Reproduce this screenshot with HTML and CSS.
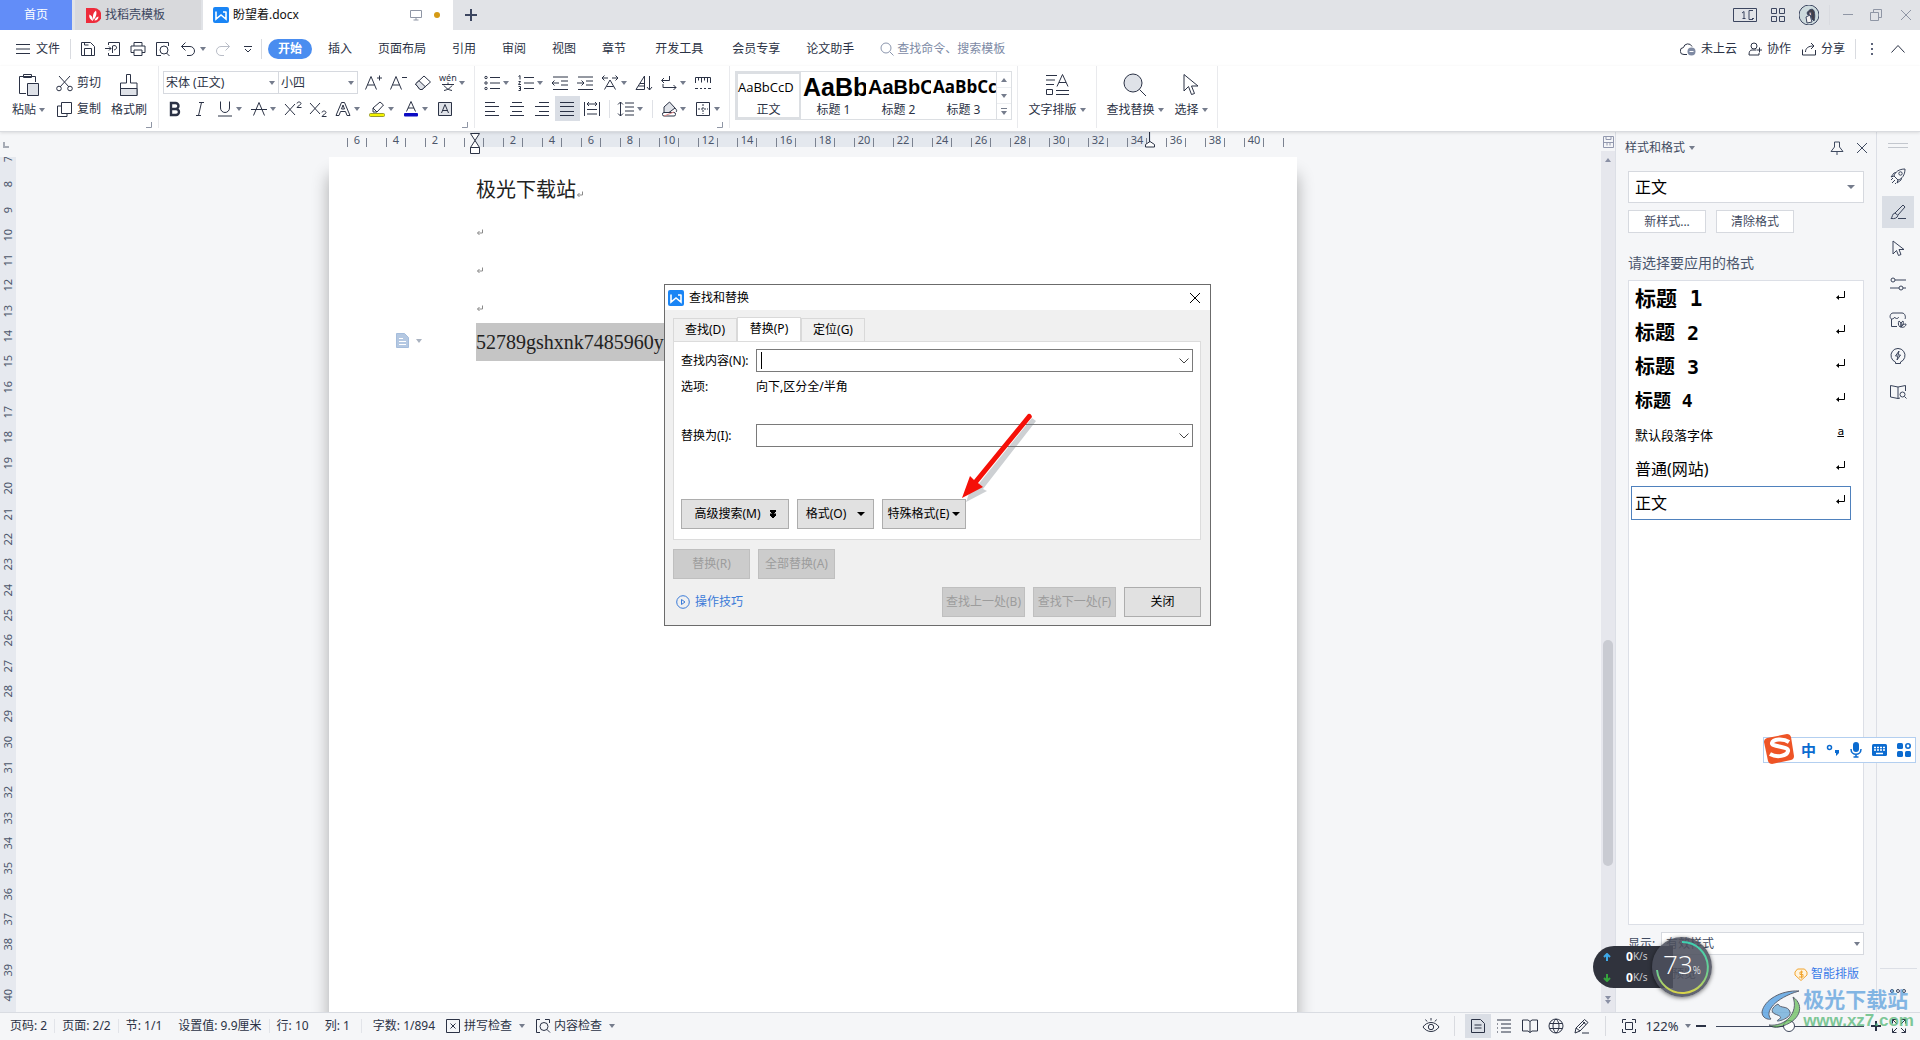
FILE: index.html
```html
<!DOCTYPE html>
<html lang="zh-CN">
<head>
<meta charset="utf-8">
<title>盼望着.docx</title>
<link rel="stylesheet" href="styles.css">
</head>
<body>
<svg class="defs" aria-hidden="true">
  <symbol id="caret" viewBox="0 0 6 6"><path d="M0 1h6L3 5z" fill="currentColor" stroke="none"/></symbol>
  <symbol id="corner" viewBox="0 0 6 6"><path d="M5.500 0v5.500H0"/></symbol>
  <symbol id="wlogo" viewBox="0 0 16 16"><rect width="16" height="16" rx="2" fill="#1a85f5" stroke="none"/><path d="M3 4.500v7.500l5-4 5 4V4.500M10 5h3" fill="none" stroke="#fff" stroke-width="1.600"/></symbol>
  <symbol id="close" viewBox="0 0 12 12"><path d="M1 1l10 10M11 1L1 11"/></symbol>
  <symbol id="pmark" viewBox="0 0 8 8"><path d="M6.500 1.500v3.500H1.500M3.500 3L1.500 5l2 2"/></symbol>
  <symbol id="enter" viewBox="0 0 12 10"><path d="M9.500 0v6.500H2"/><path d="M4 4v5L1 6.500z" fill="currentColor" stroke="none"/></symbol>
  <symbol id="pen" viewBox="0 0 18 18"><path d="M2 16l1-5L11.500 2.500l3.500 3L7 14zM3 11l4 3M9.500 4.500l3.500 3M9 16h7M6 11l6-6"/></symbol>
</svg>

<header class="titlebar">
  <button class="tab tab-home">首页</button>
  <button class="tab tab-docer"><svg width="15" height="15" viewBox="0 0 15 15"><path d="M0 0h8a7.500 7.500 0 010 15H0z" fill="#ee2b3b" stroke="none"/><path d="M7 13C3 11 3 8 3.500 6.500 5.500 7.500 7 9 7 13zM7.500 12C6 7 8 4 10 2.500c1 3 .5 6-2.500 9.500zM8.500 12.500c.5-2 2-3.500 4-4 0 2-1 4-4 4z" fill="#fff" stroke="none"/></svg>找稻壳模板</button>
  <div class="tab tab-doc"><svg width="16" height="16"><use href="#wlogo"/></svg><span class="doc-name">盼望着.docx</span><svg class="soft" width="12" height="12" viewBox="0 0 12 12"><path d="M.5 1.500h11v7H.5zM6 8.500v2.500M3.500 11h5"/></svg><i class="unsaved"></i></div>
  <button class="new-tab" aria-label="新建"><svg width="12" height="12" viewBox="0 0 12 12"><path d="M6 0v12M0 6h12" stroke-width="2"/></svg></button>
  <div class="window-tools">
    <svg width="24" height="14" viewBox="0 0 24 14"><path d="M.5.500h23v13H.5zM20 2.500h-4v9h4M9 5l2-1.500v7M9.500 10.500h3M19 10.500h2"/></svg>
    <svg width="14" height="14" viewBox="0 0 14 14"><path d="M.5.500h5v5h-5zM8.500.500h5v5h-5zM.5 8.500h5v5h-5zM8.500 8.500h5v5h-5z"/></svg>
    <svg width="20" height="20" viewBox="0 0 20 20" stroke="none"><circle cx="10" cy="10" r="10" fill="#cddadd"/><path d="M8 8c2-4 6-5 7-2s1 7 0 10l-2-2-1-5-3 1z" fill="#433f47"/><path d="M10 7l2 0 1 4-3-1z" fill="#e5c2b8"/><path d="M7 12l4-2 2 7-5 1z" fill="#f3f1f0"/></svg>
    <i class="vline"></i>
    <svg class="soft" width="12" height="12" viewBox="0 0 12 12"><path d="M1 5.500h10"/></svg>
    <svg class="soft" width="12" height="12" viewBox="0 0 12 12"><path d="M3.500 3.500v-3h8v8h-3M.5 3.500h8v8h-8z"/></svg>
    <svg class="soft last" width="12" height="12"><use href="#close"/></svg>
  </div>
</header>

<div class="menubar">
  <button class="file"><svg width="14" height="12" viewBox="0 0 14 12"><path d="M0 1.500h14M0 6h14M0 10.500h14"/></svg>文件</button>
  <i class="vline"></i>
  <div class="quick">
    <button aria-label="保存"><svg width="16" height="16" viewBox="0 0 16 16"><path d="M1.500 1.500h9l4 4v9h-13zM4.500 14V7.500h7V14M4.500 1.500V4h4"/></svg></button>
    <button aria-label="输出为PDF"><svg width="16" height="16" viewBox="0 0 16 16"><path d="M3.500 4V1.500h11v13h-11V12M0 7.500h6M4 5.500l2 2-2 2M7.500 12V5c4-2 6 3 1.500 4"/></svg></button>
    <button aria-label="打印"><svg width="16" height="16" viewBox="0 0 16 16"><path d="M4 5V1.500h8V5M4 11.500H1V5h14v6.500h-3M4 9h8v5.500H4z"/></svg></button>
    <button aria-label="打印预览"><svg width="16" height="16" viewBox="0 0 16 16"><path d="M6 14.500H1.500v-13h12V5M11.500 12l3 3"/><circle cx="9" cy="9" r="4"/></svg></button>
    <button class="undo" aria-label="撤销"><svg width="16" height="16" viewBox="0 0 16 16"><path d="M5.500 1.500l-4 4 4 4M1.500 5.500H10a4.500 4.500 0 010 9H7"/></svg><svg class="grey" width="6" height="6"><use href="#caret"/></svg></button>
    <button class="faded" aria-label="恢复"><svg width="16" height="16" viewBox="0 0 16 16"><path d="M10.500 1.500l4 4-4 4M14.500 5.500H6a4.500 4.500 0 000 9h3"/></svg></button>
    <button class="extra" aria-label="更多"><svg width="10" height="10" viewBox="0 0 10 10"><path d="M1 2.500h8M2 5l3 3 3-3"/></svg></button>
  </div>
  <i class="vline"></i>
  <nav class="tabs">
    <a href="#" class="current">开始</a><a href="#">插入</a><a href="#">页面布局</a><a href="#">引用</a><a href="#">审阅</a><a href="#">视图</a><a href="#">章节</a><a href="#" class="wide">开发工具</a><a href="#" class="wide">会员专享</a><a href="#">论文助手</a>
  </nav>
  <label class="search"><svg width="14" height="14" viewBox="0 0 14 14"><circle cx="6" cy="6" r="5"/><path d="M10 10l3.500 3.500"/></svg><input type="text" placeholder="查找命令、搜索模板"></label>
  <div class="share">
    <button><svg width="16" height="14" viewBox="0 0 16 14"><path d="M7 12.500H4a3.500 3.500 0 01-.5-7 4.500 4.500 0 018.500-1"/><circle cx="11.500" cy="9.500" r="4" fill="#7f8aa3" stroke="none"/><path d="M9.500 9.500h4" stroke="#fff"/></svg>未上云</button>
    <button><svg width="14" height="14" viewBox="0 0 14 14"><circle cx="6" cy="4" r="3"/><path d="M8.500 8H4c-2 0-3 1.500-3 5h10v-2M9 8h5M11.500 5.500v5"/></svg>协作</button>
    <button><svg width="14" height="14" viewBox="0 0 14 14"><path d="M.5 7.500v5.500h13V8M3.500 10c0-4 3-6 8-6M9 1l3 3-3 3"/></svg>分享</button>
    <i class="vline"></i>
    <svg width="4" height="14" viewBox="0 0 4 14"><path d="M1 1h2v2H1zM1 6h2v2H1zM1 11h2v2H1z" fill="#5c647a" stroke="none"/></svg>
    <svg width="14" height="8" viewBox="0 0 14 8"><path d="M.5 7.500l6.500-7 6.500 7"/></svg>
  </div>
</div>

<section class="ribbon">
  <div class="group clipboard">
    <button class="big"><svg width="22" height="24" viewBox="0 0 22 24"><path d="M8 20.500H1.500v-17h16V9M5.500 1.500h8v3h-8z"/><path d="M9.500 10.500h11v12h-11z" fill="#dfe2e8"/></svg><span>粘贴<svg class="grey" width="6" height="6"><use href="#caret"/></svg></span></button>
    <div class="pair">
      <button><svg width="17" height="17" viewBox="0 0 17 17"><path d="M3 1l10 11M14 1L4 12"/><circle cx="3" cy="13.500" r="2.300"/><circle cx="14" cy="13.500" r="2.300"/></svg>剪切</button>
      <button><svg width="17" height="17" viewBox="0 0 17 17"><path d="M5.500 1.500h10v11h-10zM5.500 5H1.500v10.500H11v-3"/></svg>复制</button>
    </div>
    <button class="big"><svg width="20" height="24" viewBox="0 0 20 24"><path d="M7.500 10V1.500h4V10H18v12.500H1.500V10z"/><path d="M1.500 15.500H18v7H1.500z" fill="#dfe2e8"/></svg><span>格式刷</span></button>
    <svg class="corner" width="6" height="6"><use href="#corner"/></svg>
  </div>
  <div class="group font">
    <div class="row">
      <span class="pick face"><select aria-label="字体"><option>宋体 (正文)</option></select><svg width="6" height="6"><use href="#caret"/></svg></span><span class="pick size"><select aria-label="字号"><option>小四</option></select><svg width="6" height="6"><use href="#caret"/></svg></span>
      <button aria-label="增大字号"><svg width="18" height="18" viewBox="0 0 18 18"><path d="M1.500 15.500L7 2.500l5.500 13M3.500 11h7M13 4h5M15.500 1.500v5"/></svg></button>
      <button aria-label="减小字号"><svg width="18" height="18" viewBox="0 0 18 18"><path d="M1.500 15.500L7 2.500l5.500 13M3.500 11h7M13 3.500h5"/></svg></button>
      <button aria-label="清除格式"><svg width="18" height="18" viewBox="0 0 18 18"><path d="M1.500 10L10 2l6.500 6L8 15.500H6z"/><path d="M1.500 10L5 6.700l6.300 6L8 15.500H6z" fill="#dfe2e8"/></svg></button>
      <button class="split" aria-label="拼音指南"><svg class="pinyin" width="18" height="18" viewBox="0 0 18 18"><text x="0" y="7">wén</text><path d="M3 10.500h12M9 8.500v2M5 11.500c2 3 5 4.500 8 5M13 11.500c-2 3-5 4.500-8 5"/></svg><svg class="grey" width="6" height="6"><use href="#caret"/></svg></button>
    </div>
    <div class="row">
      <button aria-label="加粗"><svg width="18" height="18" viewBox="0 0 18 18"><path d="M5 3h4.500a3 3 0 010 6H5zM5 9h5a3 3 0 010 6H5z" stroke-width="2.400"/></svg></button>
      <button aria-label="倾斜"><svg width="18" height="18" viewBox="0 0 18 18"><path d="M8 2.500h5M5 15.500h5M10.500 2.500l-3 13"/></svg></button>
      <button class="split" aria-label="下划线"><svg width="18" height="18" viewBox="0 0 18 18"><path d="M4.500 1.500V8a4.500 4.500 0 009 0V1.500M2 16h14"/></svg><svg class="grey" width="6" height="6"><use href="#caret"/></svg></button>
      <button class="split" aria-label="删除线"><svg width="18" height="18" viewBox="0 0 18 18"><path d="M3.500 15.500L9 2.500l5.500 13M1 9.500h16"/></svg><svg class="grey" width="6" height="6"><use href="#caret"/></svg></button>
      <button aria-label="上标"><svg width="18" height="18" viewBox="0 0 18 18"><path d="M1 4l10 11M11 4L1 15M13 3.500c0-2 4-2 4 0 0 1.500-3 2-4 4h4.500"/></svg></button>
      <button aria-label="下标"><svg width="18" height="18" viewBox="0 0 18 18"><path d="M1 3l10 11M11 3L1 14M13 12.500c0-2 4-2 4 0 0 1.500-3 2-4 4h4.500"/></svg></button>
      <button class="split" aria-label="文字效果"><svg width="18" height="18" viewBox="0 0 18 18"><path d="M2 15.500L7.500 2.500h3l5.500 13h-3l-1.500-4h-5l-1.500 4zM7.500 9h3L9 5z"/></svg><svg class="grey" width="6" height="6"><use href="#caret"/></svg></button>
      <button class="split" aria-label="突出显示"><svg width="18" height="18" viewBox="0 0 18 18"><path d="M5 11V8l7-6 3.500 3L9 12H5zM5 8l4 4"/><rect x="1.500" y="13.500" width="15" height="3" rx="1" fill="#f5f500" stroke="#9a9a30"/></svg><svg class="grey" width="6" height="6"><use href="#caret"/></svg></button>
      <button class="split" aria-label="字体颜色"><svg width="18" height="18" viewBox="0 0 18 18"><path d="M4.500 11.500L9 1.500l4.500 10M6 8h6"/><rect x="2" y="13" width="14" height="3.500" rx="1" fill="#0b0bc4" stroke="none"/></svg><svg class="grey" width="6" height="6"><use href="#caret"/></svg></button>
      <button aria-label="字符底纹"><svg width="18" height="18" viewBox="0 0 18 18"><path d="M2.500 2.500h13v13h-13z" fill="#dfe2e8"/><path d="M5.500 13L9 4.500l3.500 8.500M6.500 10.500h5"/></svg></button>
    </div>
    <svg class="corner" width="6" height="6"><use href="#corner"/></svg>
  </div>
  <div class="group para">
    <div class="row">
      <button class="split" aria-label="项目符号"><svg width="18" height="18" viewBox="0 0 18 18"><path d="M7 3.500h10M7 9h10M7 14.500h10"/><circle cx="3" cy="3.500" r="1.200"/><circle cx="3" cy="9" r="1.200"/><circle cx="3" cy="14.500" r="1.200"/></svg><svg class="grey" width="6" height="6"><use href="#caret"/></svg></button>
      <button class="split" aria-label="编号"><svg width="18" height="18" viewBox="0 0 18 18"><path d="M7 3.500h10M7 9h10M7 14.500h10M1.500 2.500L3 1.500v4M1.500 7.500h2l-2 3h2.500M1.500 12.500h2v4h-2M2 14.500h1.500"/></svg><svg class="grey" width="6" height="6"><use href="#caret"/></svg></button>
      <button aria-label="减少缩进"><svg width="18" height="18" viewBox="0 0 18 18"><path d="M2 3h15M10 7h7M10 11h7M2 15.500h15M1 9h7M3.500 6.500L1 9l2.500 2.500"/></svg></button>
      <button aria-label="增加缩进"><svg width="18" height="18" viewBox="0 0 18 18"><path d="M2 3h15M10 7h7M10 11h7M2 15.500h15M1 9h7M5.500 6.500L8 9l-2.500 2.500"/></svg></button>
      <button class="split" aria-label="中文版式"><svg width="18" height="18" viewBox="0 0 18 18"><path d="M3.500 15.500L9 6l5.500 9.500M5.500 12.500h7M1 4h6M3.500 1.500L1 4l2.500 2.500M11 4h6M14.500 1.500L17 4l-2.500 2.500"/></svg><svg class="grey" width="6" height="6"><use href="#caret"/></svg></button>
      <button aria-label="排序"><svg width="18" height="18" viewBox="0 0 18 18"><path d="M1 15.500L9.500 2v13.500zM5 9.500h4.500M3.500 12h6M14.500 2v14M12 13l2.500 3 2.500-3"/></svg></button>
      <button class="split" aria-label="换行符"><svg width="18" height="18" viewBox="0 0 18 18"><path d="M9.500 2v4.500H2M4 4L1.500 6.500 4 9M3 10v3.500h13M13.500 11l2.500 2.500-2.500 2.500"/></svg><svg class="grey" width="6" height="6"><use href="#caret"/></svg></button>
      <button aria-label="制表位"><svg width="18" height="18" viewBox="0 0 18 18"><path d="M1.500 9V3.500h15V9M4.500 3.500v3M7.500 3.500v5M10.500 3.500v3M13.500 3.500v5M1 14.500h3M6 14.500h2M10 14.500h2M14 14.500h3"/></svg></button>
    </div>
    <div class="row">
      <button aria-label="左对齐"><svg width="18" height="18" viewBox="0 0 18 18"><path d="M2 2.500h10M2 6.500h14M2 11.500h10M2 15.500h14"/></svg></button>
      <button aria-label="居中"><svg width="18" height="18" viewBox="0 0 18 18"><path d="M4 2.500h10M2 6.500h14M4 11.500h10M2 15.500h14"/></svg></button>
      <button aria-label="右对齐"><svg width="18" height="18" viewBox="0 0 18 18"><path d="M6 2.500h10M2 6.500h14M6 11.500h10M2 15.500h14"/></svg></button>
      <button class="on" aria-label="两端对齐"><svg width="18" height="18" viewBox="0 0 18 18"><path d="M2 2.500h14M2 6.500h14M2 11.500h14M2 15.500h14"/></svg></button>
      <button aria-label="分散对齐"><svg width="18" height="18" viewBox="0 0 18 18"><path d="M1.500 2v14M16.500 2v14M4 4h10M6 2L4 4l2 2M12 2l2 2-2 2M4 9.500h10M4 14h10"/></svg></button>
      <i class="sep"></i>
      <button class="split" aria-label="行距"><svg width="18" height="18" viewBox="0 0 18 18"><path d="M8 3h9M8 7h9M8 11h9M8 15h9M3.500 2v14M1 4.500L3.500 2 6 4.500M1 13.500L3.500 16 6 13.500"/></svg><svg class="grey" width="6" height="6"><use href="#caret"/></svg></button>
      <i class="sep"></i>
      <button class="split" aria-label="底纹颜色"><svg width="18" height="18" viewBox="0 0 18 18"><path d="M4 7l5.500-5L15 8l-6 4.500H4zM15 8c2 2 2 3 1 4" fill="#dfe2e8"/><rect x="2.500" y="12.500" width="13" height="3.500" rx="1.500" fill="#fff"/><path d="M4 16l10-4" stroke="#d88"/></svg><svg class="grey" width="6" height="6"><use href="#caret"/></svg></button>
      <button class="split" aria-label="边框"><svg width="18" height="18" viewBox="0 0 18 18"><path d="M2.500 2.500h13v13h-13z"/><path d="M9 4v10M4 9h10" stroke-dasharray="2 1"/></svg><svg class="grey" width="6" height="6"><use href="#caret"/></svg></button>
    </div>
    <svg class="corner" width="6" height="6"><use href="#corner"/></svg>
  </div>
  <div class="group styles">
    <div class="gallery">
      <button class="style chosen"><b class="pv0">AaBbCcD</b><span>正文</span></button>
      <button class="style"><b class="pv1">AaBb</b><span>标题 1</span></button>
      <button class="style"><b class="pv2">AaBbC</b><span>标题 2</span></button>
      <button class="style"><b class="pv3">AaBbCc</b><span>标题 3</span></button>
      <div class="spin">
        <button aria-label="上一行"><svg width="6" height="6" viewBox="0 0 6 6"><path d="M0 5h6L3 1z" fill="currentColor" stroke="none"/></svg></button>
        <button aria-label="下一行"><svg width="6" height="6"><use href="#caret"/></svg></button>
        <button aria-label="展开"><svg width="6" height="8" viewBox="0 0 6 8"><path d="M0 .5h6"/><path d="M0 3h6L3 7z" fill="currentColor" stroke="none"/></svg></button>
      </div>
    </div>
  </div>
  <div class="group tools layout">
    <button class="big"><svg width="24" height="24" viewBox="0 0 24 24"><path d="M1 2.500h11M1 7h9M1 11.500h8M1.500 16.500h6v5h-6zM11 17.500h13M11 21.500h13M12 13.500l5.500-12L23 13.500M14 9.500h7"/></svg><span>文字排版<svg class="grey" width="6" height="6"><use href="#caret"/></svg></span></button>
  </div>
  <div class="group tools find">
    <button class="big"><svg width="24" height="24" viewBox="0 0 24 24"><circle cx="10" cy="10" r="9" fill="#dfe2e8"/><path d="M16.500 16.500l6.500 6.500"/></svg><span>查找替换<svg class="grey" width="6" height="6"><use href="#caret"/></svg></span></button>
    <button class="big"><svg width="18" height="24" viewBox="0 0 18 24"><path d="M2 1.500V18l4.500-4.500 3 8 3-1-3-7.500H16z"/></svg><span>选择<svg class="grey" width="6" height="6"><use href="#caret"/></svg></span></button>
  </div>
</section>

<main class="workspace">
  <aside class="vruler">
    <i class="tabstop"></i>
    <ol><li>7</li><li>8</li><li>9</li><li>10</li><li>11</li><li>12</li><li>13</li><li>14</li><li>15</li><li>16</li><li>17</li><li>18</li><li>19</li><li>20</li><li>21</li><li>22</li><li>23</li><li>24</li><li>25</li><li>26</li><li>27</li><li>28</li><li>29</li><li>30</li><li>31</li><li>32</li><li>33</li><li>34</li><li>35</li><li>36</li><li>37</li><li>38</li><li>39</li><li>40</li></ol>
  </aside>
  <div class="canvas">
    <div class="sheet">
      <div class="hruler">
        <ol><li>6</li><li>4</li><li>2</li><li></li><li>2</li><li>4</li><li>6</li><li>8</li><li>10</li><li>12</li><li>14</li><li>16</li><li>18</li><li>20</li><li>22</li><li>24</li><li>26</li><li>28</li><li>30</li><li>32</li><li>34</li><li>36</li><li>38</li><li>40</li></ol>
        <svg class="indent-left" width="10" height="24" viewBox="0 0 10 24"><path d="M.5 1.500h9L5 8.500zM.5 15.500h9L5 8.500zM.5 15.500h9v6h-9z" fill="#fff"/></svg>
        <svg class="indent-right" width="10" height="16" viewBox="0 0 10 16"><path d="M4.500 0v10M5 9.500l4.500 3v2.500h-9v-2.500z" fill="#fff"/></svg>
      </div>
      <article class="page">
        <p>极光下载站<svg width="8" height="8"><use href="#pmark"/></svg></p>
        <p><svg width="8" height="8"><use href="#pmark"/></svg></p>
        <p><svg width="8" height="8"><use href="#pmark"/></svg></p>
        <p><svg width="8" height="8"><use href="#pmark"/></svg></p>
        <p class="selected">52789gshxnk7485960ys</p>
        <button class="para-handle" aria-label="段落布局"><svg width="13" height="15" viewBox="0 0 13 15"><path d="M.5.500h8l4 4v10H.5z" fill="#b4c8e2" stroke="#a5bddc"/><path d="M3 5.500h4M3 8.500h7M3 11.500h7" stroke="#fff"/></svg><svg width="6" height="6"><use href="#caret"/></svg></button>
      </article>
    </div>
  </div>
  <div class="scroll">
    <svg width="11" height="12" viewBox="0 0 11 12"><path d="M.5.500h10v11H.5zM.5 6.500h10M3 .5v3h5v-3M4 6.500v3M7 6.500v3"/></svg>
    <div class="track">
      <svg width="6" height="6" viewBox="0 0 6 6"><path d="M0 5h6L3 1z" fill="currentColor" stroke="none"/></svg>
      <div class="run"><i class="thumb"></i></div>
      <svg width="6" height="6"><use href="#caret"/></svg>
      <svg width="6" height="8" viewBox="0 0 6 8"><path d="M0 4h6L3 0zM0 8h6L3 4z" fill="currentColor" stroke="none"/></svg>
      <svg width="6" height="8" viewBox="0 0 6 8"><path d="M0 0h6L3 4zM0 4h6L3 8z" fill="currentColor" stroke="none"/></svg>
    </div>
  </div>
  <aside class="panel">
    <header><h2>样式和格式<svg class="grey" width="6" height="6"><use href="#caret"/></svg></h2>
      <button aria-label="固定"><svg width="14" height="14" viewBox="0 0 14 14"><path d="M4.500 1h5v5l3.500 4.500H1L4.500 6zM7 10.500V14"/></svg></button>
      <button aria-label="关闭窗格"><svg width="12" height="12"><use href="#close"/></svg></button></header>
    <span class="pick current-style"><select aria-label="当前样式"><option>正文</option></select><svg width="8" height="6" viewBox="0 0 6 6" preserveAspectRatio="none"><path d="M0 1h6L3 5z" fill="currentColor" stroke="none"/></svg></span>
    <div class="actions"><button>新样式...</button><button>清除格式</button></div>
    <h3>请选择要应用的格式</h3>
    <ul class="list">
      <li class="h1">标题 1<svg width="12" height="10"><use href="#enter"/></svg></li>
      <li class="h2">标题 2<svg width="12" height="10"><use href="#enter"/></svg></li>
      <li class="h2">标题 3<svg width="12" height="10"><use href="#enter"/></svg></li>
      <li class="h4">标题 4<svg width="12" height="10"><use href="#enter"/></svg></li>
      <li class="small">默认段落字体<u>a</u></li>
      <li>普通(网站)<svg width="12" height="10"><use href="#enter"/></svg></li>
      <li class="picked">正文<svg width="12" height="10"><use href="#enter"/></svg></li>
    </ul>
    <div class="show"><label for="show">显示:</label><span class="pick"><select id="show"><option>有效样式</option></select><svg width="6" height="6"><use href="#caret"/></svg></span></div>
    <div class="foot"><label><input type="checkbox" checked>显示预览</label><a href="#"><svg width="14" height="13" viewBox="0 0 14 13"><path d="M3.500 1h7L13 4v3l-6 5.500L1 7V4z" fill="#fff4de" stroke="#f2a530"/><path d="M9 4H6v2.500h3V9H5M7.500 2.500v8" stroke="#f2a530"/></svg>智能排版</a></div>
  </aside>
  <aside class="rail">
    <i class="grip"></i>
    <button aria-label="快捷"><svg width="18" height="18" viewBox="0 0 18 18"><path d="M5 9c1-4 5-7 11-7 0 6-3 10-7 11zM5 9l-3 1 3-4 2-.500M9 13l-1 3 4-3 .5-2M2 13l2-2M3 16l3-3M6 17l1-1"/><circle cx="11.500" cy="6.500" r="1.700"/></svg></button>
    <button class="on" aria-label="样式"><svg width="18" height="18" viewBox="0 0 18 18"><path d="M6 10l8-8 2 2-7 8M6 10l3 2.500c-1 2.500-3 3.500-7 3 1.500-1 1-5 4-5.500zM9 15.500h8"/></svg></button>
    <button aria-label="选择"><svg width="18" height="18" viewBox="0 0 18 18"><path d="M4 2v13l3.500-3.500 2 5 2.500-1-2-5h5z"/></svg></button>
    <button aria-label="属性"><svg width="18" height="18" viewBox="0 0 18 18"><circle cx="4" cy="5" r="2"/><circle cx="12" cy="13" r="2"/><path d="M6 5h11M1 13h9M14 13h3"/></svg></button>
    <button aria-label="工具箱"><svg width="18" height="18" viewBox="0 0 18 18"><path d="M8 15.500H2.500V8C0 7 1 2 4 2h9c3 0 4 4 3 6M2.500 8c2 0 3-1 3-2 1 2 4 2 4 0M11 16c-2-2-2-4-1-6 2 1 2 3 2 6 0-3 0-5 2-6 1 2 0 4-2 6 1-2 3-3 5-3 0 2-2 4-5 3z"/></svg></button>
    <button aria-label="智能"><svg width="18" height="18" viewBox="0 0 18 18"><path d="M6.500 15a7 7 0 115 0v1.500h-5zM10 4L6.500 9H9l-1 4 3.500-5H9z"/></svg></button>
    <button aria-label="查阅"><svg width="18" height="18" viewBox="0 0 18 18"><path d="M9 15.500V4L1.500 2.500V14L9 15.500M9 4l7.500-1.500V8M9 15.500l2-.5"/><circle cx="13.500" cy="11.500" r="2.500"/><path d="M15.500 13.500l2 2"/></svg></button>
    <div class="more"><svg width="18" height="6" viewBox="0 0 18 6"><circle cx="3" cy="3" r="1.500"/><circle cx="9" cy="3" r="1.500"/><circle cx="15" cy="3" r="1.500"/></svg></div>
  </aside>
</main>

<footer class="status">
  <span>页码: 2</span><i class="vline"></i><span>页面: 2/2</span><i class="vline"></i><span>节: 1/1</span><i class="gap"></i><span>设置值: 9.9厘米</span><i class="vline"></i><span>行: 10</span><i class="gap"></i><span>列: 1</span><i class="vline wide"></i><span>字数: 1/894</span>
  <button class="check"><svg width="16" height="14" viewBox="0 0 16 14"><path d="M6 .5H1.500v13H6M10 .5h4.500v13H10M5.500 4.500l5 5M10.500 4.500l-5 5M6 .5h4M6 13.500h4"/></svg>拼写检查<svg class="grey" width="6" height="6"><use href="#caret"/></svg></button>
  <button class="check"><svg width="16" height="14" viewBox="0 0 16 14"><path d="M5 .5H1.500v13H5M10 .5h4.500V4M12 10.500l3 3"/><circle cx="9" cy="7.500" r="4"/></svg>内容检查<svg class="grey" width="6" height="6"><use href="#caret"/></svg></button>
  <div class="views">
    <button aria-label="护眼模式"><svg width="18" height="18" viewBox="0 0 18 18"><path d="M1 10c4-6 12-6 16 0-4 6-12 6-16 0zM9 1v2.500M3.500 2.500L5 4.500M14.500 2.500L13 4.500"/><circle cx="9" cy="10" r="2.700"/></svg></button>
    <i class="vline"></i>
    <button class="on" aria-label="页面视图"><svg width="16" height="16" viewBox="0 0 16 16"><path d="M1.500 1.500h9l4 4v9h-13zM4.500 7h7M4.500 10h7"/></svg></button>
    <button aria-label="大纲"><svg width="16" height="16" viewBox="0 0 16 16"><path d="M1 2h14M5 6h10M5 10h10M1 14h1M5 14h10M1 6h1M1 10h1"/></svg></button>
    <button aria-label="阅读版式"><svg width="16" height="16" viewBox="0 0 16 16"><path d="M8 14.500L6 13H.5V2H6l2 1.500L10 2h5.500v11H10zM8 3.500v11"/></svg></button>
    <button aria-label="Web版式"><svg width="16" height="16" viewBox="0 0 16 16"><circle cx="8" cy="8" r="7"/><path d="M1.500 5.500h13M1.500 10.500h13M8 1C4 4 4 12 8 15c4-3 4-11 0-14"/></svg></button>
    <button aria-label="写作模式"><svg width="18" height="18"><use href="#pen"/></svg></button>
    <i class="vline"></i>
    <button aria-label="最佳显示比例"><svg width="16" height="16" viewBox="0 0 16 16"><path d="M1.500 5V1.500H5M11 1.500h3.500V5M14.500 11v3.500H11M5 14.500H1.500V11M4.500 4.500h7v7h-7z"/></svg></button>
    <button class="zoom">122%<svg class="grey" width="6" height="6"><use href="#caret"/></svg></button>
    <button class="step" aria-label="缩小"><svg width="12" height="12" viewBox="0 0 12 12"><path d="M1 6h10" stroke-width="2"/></svg></button>
    <input class="slider" type="range" min="0" max="100" value="49" aria-label="显示比例">
    <button class="step" aria-label="放大"><svg width="12" height="12" viewBox="0 0 12 12"><path d="M1 6h10M6 1v10" stroke-width="2"/></svg></button>
    <button class="full" aria-label="全屏"><svg width="16" height="16" viewBox="0 0 16 16"><path d="M1.500 5.500v-4h4M10.500 1.500h4v4M14.500 10.500v4h-4M5.500 14.500h-4v-4M1.500 1.500L6 6M14.500 1.500L10 6M14.500 14.500L10 10M1.500 14.500L6 10"/></svg></button>
  </div>
</footer>

<section class="dialog" role="dialog" aria-label="查找和替换">
  <header><svg width="16" height="16"><use href="#wlogo"/></svg><span>查找和替换</span><button aria-label="关闭"><svg width="12" height="12"><use href="#close"/></svg></button></header>
  <div class="dialog-tabs"><button>查找(D)</button><button class="active">替换(P)</button><button>定位(G)</button></div>
  <div class="sheetbox">
    <div class="field"><label for="find">查找内容(N):</label><span class="combo"><input id="find" type="text"><i class="cursor"></i><svg width="10" height="6" viewBox="0 0 10 6"><path d="M.5.500L5 5 9.500.500"/></svg></span></div>
    <div class="field"><span class="lab">选项:</span><span>向下,区分全/半角</span></div>
    <div class="field second"><label for="repl">替换为(I):</label><span class="combo"><input id="repl" type="text"><svg width="10" height="6" viewBox="0 0 10 6"><path d="M.5.500L5 5 9.500.500"/></svg></span></div>
    <div class="buttons">
      <button class="b-adv">高级搜索(M)<svg width="6" height="8" viewBox="0 0 6 8" stroke="none"><path d="M0 0h6v1H0zM0 1h6L3 4zM0 4h6v1H0zM0 5h6L3 8z" fill="currentColor"/></svg></button>
      <button class="b-fmt">格式(O)<svg width="8" height="6" viewBox="0 0 8 6"><path d="M0 1h8L4 5z" fill="currentColor" stroke="none"/></svg></button>
      <button class="b-spec">特殊格式(E)<svg width="8" height="6" viewBox="0 0 8 6"><path d="M0 1h8L4 5z" fill="currentColor" stroke="none"/></svg></button>
    </div>
  </div>
  <div class="buttons replace"><button disabled>替换(R)</button><button disabled>全部替换(A)</button></div>
  <div class="buttons last"><a href="#"><svg width="14" height="14" viewBox="0 0 14 14"><circle cx="7" cy="7" r="6.300"/><path d="M5.500 4.500v5l3.500-2.500z"/></svg>操作技巧</a><button class="mid" disabled>查找上一处(B)</button><button class="mid" disabled>查找下一处(F)</button><button>关闭</button></div>
</section>

<svg class="pointer" width="84" height="96" viewBox="0 0 84 96"><path d="M74 8l4 3L25 79l4 2L8 92l8-22 3 6z" fill="#707880" opacity=".35"/><path d="M70 4q3-1 4 3L20 73l5 4L4 88l8-22 4 4z" fill="#f51008"/></svg>

<aside class="ime">
  <svg class="ime-logo" width="32" height="32" viewBox="0 0 32 32"><path d="M4 5l20-4q3 0 4 3l3 19q0 3-3 4L9 31q-3 0-4-3L1 9q0-3 3-4z" fill="#ee5426"/><path d="M26 9c-6-4-16-3-17 1s17 3 16 8-11 7-18 3" fill="none" stroke="#fff" stroke-width="4"/></svg>
  <b>中</b>
  <svg width="14" height="14" viewBox="0 0 14 14"><circle cx="3.500" cy="4.500" r="2" stroke-width="1.500"/><path d="M9 7h4v3l-3 3v-3H9z" fill="currentColor" stroke="none"/></svg>
  <svg width="12" height="16" viewBox="0 0 12 16"><rect x="3" y="0" width="6" height="10" rx="3" fill="currentColor" stroke="none"/><path d="M1 7c0 7 10 7 10 0M6 12v3M3.500 15h5" stroke-width="1.500"/></svg>
  <svg width="15" height="12" viewBox="0 0 15 12"><rect width="15" height="12" rx="1.500" fill="currentColor" stroke="none"/><path d="M2 3.500h11M2 6h11" stroke="#fff" stroke-width="1.500" stroke-dasharray="2 1"/><path d="M4 9.500h7" stroke="#fff" stroke-width="1.500"/></svg>
  <svg width="14" height="14" viewBox="0 0 14 14"><g fill="currentColor" stroke="none"><rect width="6" height="6" rx="1.500"/><rect y="8" width="6" height="6" rx="1.500"/><rect x="8" y="8" width="6" height="6" rx="1.500"/></g><circle cx="11" cy="3" r="2.200" stroke-width="1.600"/></svg>
</aside>

<aside class="meter">
  <div class="rates">
    <span><svg width="8" height="8" viewBox="0 0 8 8"><path d="M4 8V1M1 4l3-3 3 3" stroke="#3fa9e8" stroke-width="2"/></svg><b>0</b><small>K/s</small></span>
    <span><svg width="8" height="8" viewBox="0 0 8 8"><path d="M4 0v7M1 4l3 3 3-3" stroke="#35a53d" stroke-width="2"/></svg><b>0</b><small>K/s</small></span>
  </div>
  <div class="dial"><svg width="60" height="60" viewBox="0 0 60 60"><defs><linearGradient id="arc" x1="0" y1="0" x2="0" y2="1"><stop offset="0" stop-color="#3fd0b0"/><stop offset=".6" stop-color="#6fcf90"/><stop offset="1" stop-color="#d8d24a"/></linearGradient></defs><path d="M30 5A25.500 25.500 0 11 5 33" stroke="url(#arc)" stroke-width="2"/></svg><strong>73<small>%</small></strong></div>
</aside>

<aside class="brand">
  <svg width="42" height="38" viewBox="0 0 42 38" stroke="none"><path d="M38 1C20 0 3 10 1 22c0 6 6 8 9 7C3 22 14 8 38 1z" fill="#4b9be0"/><path d="M17 14c-6 3-8 8-3 10s8 3 3 6 14-1 12-8-10-3-12-8z" fill="#67a9d8"/><path d="M32 7c12 8 8 25-14 30-3 1-8 0-10-2 16 2 30-12 24-28z" fill="#69be5c"/></svg>
  <div><strong>极光下载站</strong><span>www.xz7.com</span></div>
</aside>
</body>
</html>
```
FILE: styles.css
```css
* { box-sizing: border-box; }
body {
  margin: 0; height: 100vh; min-width: 1400px; display: flex; flex-direction: column; overflow: hidden;
  font: 12px/18px "Noto Sans", "Noto Sans CJK SC", sans-serif; color: #2b3245; background: #f5f6f8;
}
button, input, select { font: inherit; color: inherit; margin: 0; }
button { border: 0; padding: 0; background: none; display: flex; align-items: center; justify-content: center; white-space: nowrap; }
a { color: inherit; text-decoration: none; }
svg { flex: none; fill: none; stroke: currentColor; display: block; }
.defs { position: absolute; width: 0; height: 0; }
.grey { color: #757c8c; }
.vline { width: 1px; height: 20px; background: #d9dbe0; flex: none; }
ol, ul { list-style: none; margin: 0; padding: 0; }

/* title bar */
.titlebar { height: 30px; display: flex; flex: none; background: #e1e3e7; color: #3c4660; }
.tab { height: 30px; display: flex; align-items: center; }
.tab-home { width: 72px; background: #628df8; color: #fff; margin-right: 3px; }
.tab-docer { width: 126px; padding-left: 11px; gap: 4px; justify-content: flex-start; background: #d8d9dc; margin-right: 2px; }
.tab-doc { width: 250px; padding: 0 10px; gap: 4px; background: #fff; color: #111; }
.doc-name { flex: 1; }
.unsaved { width: 6px; height: 6px; border-radius: 3px; background: #d59a14; margin: 0 3px 0 8px; }
.soft { color: #8f96a5; }
.new-tab { width: 36px; }
.window-tools { margin-left: auto; display: flex; align-items: center; gap: 14px; padding-right: 8px; }
.window-tools .vline { margin: 0 -2px 0 -4px; }
.window-tools .soft + .soft { margin-left: 2px; }
.window-tools .soft + .last { margin-left: 4px; }

/* menu bar */
.menubar { height: 36px; flex: none; display: flex; align-items: center; background: #fff; padding: 2px 15px 0 16px; }
.file { gap: 6px; margin-right: 10px; }
.quick { display: flex; align-items: center; gap: 9px; padding: 0 5px 0 9px; }
.undo { gap: 4px; }
.quick .extra { padding: 0 3px; }
.faded { color: #b9bdc7; }
.tabs { display: flex; align-items: center; gap: 26px; padding-left: 6px; }
.tabs a { white-space: nowrap; }
.tabs .current { background: #4a8df0; color: #fff; font-weight: bold; border-radius: 10px; line-height: 20px; padding: 0 10px; margin-right: -10px; }
.tabs .wide { margin-left: 3px; }
.search { display: flex; align-items: center; gap: 3px; margin-left: 26px; color: #8b96ad; }
.search input { border: 0; outline: 0; width: 140px; padding: 0; background: none; }
.search input::placeholder { color: #7d8aa5; opacity: 1; }
.share { margin-left: auto; display: flex; align-items: center; gap: 11px; }
.share button { gap: 5px; }
.share .vline { margin: 0 3px 0 -1px; }
.share > svg:last-child { margin-left: 6px; }

/* ribbon */
.ribbon { height: 66px; flex: none; display: flex; background: #fff; border-bottom: 1px solid #d9dbdf; box-shadow: 0 1px 3px #0000001c; position: relative; z-index: 1; }
.group { display: flex; position: relative; border-right: 1px solid #e9eaed; margin-bottom: 3px; }
.corner { position: absolute; right: 6px; bottom: 0; color: #8f96a5; }
.clipboard { width: 159px; padding: 5px 0 0 12px; }
.big { flex-direction: column; justify-content: flex-start; gap: 4px; padding-top: 2px; align-self: flex-start; }
.big span { display: flex; align-items: center; gap: 3px; }
.pair { display: flex; flex-direction: column; gap: 8px; margin: 3px 10px 0 11px; }
.pair button { gap: 4px; height: 18px; }
.font, .para { flex-direction: column; padding-top: 4px; gap: 1px; }
.font { width: 316px; padding-left: 4px; }
.para { width: 255px; padding-left: 5px; }
.row { display: flex; align-items: center; height: 25px; }
.row button { width: 25px; height: 25px; justify-content: flex-start; padding-left: 3px; }
.row .split { width: 34px; gap: 2px; }
.row .on, .rail .on, .views .on { background: #dadee5; }
.sep { width: 1px; height: 18px; background: #dfe1e6; margin: 0 4px; }
.pinyin { overflow: visible; }
.pinyin text { font-size: 9px; fill: currentColor; stroke: none; }
.pick { display: grid; align-items: center; border: 1px solid #d6d9df; background: #fff; height: 23px; }
.pick select, .pick svg { grid-area: 1 / 1; }
.pick select { appearance: none; border: 0; outline: 0; background: none; padding: 0 2px; width: 100%; height: 100%; }
.pick svg { justify-self: end; margin-right: 3px; color: #757c8c; pointer-events: none; }
.face { width: 116px; }
.size { width: 79px; border-left: 0; margin-right: 3px; }
.styles { padding: 5px 5px 0; width: 288px; }
.gallery { display: flex; height: 49px; width: 278px; border: 1px solid #dcdfe3; }
.style { width: 65px; flex-direction: column; justify-content: flex-end; overflow: hidden; }
.style b { height: 28px; line-height: 28px; width: 100%; overflow: hidden; text-align: left; color: #000; font-family: "Open Sans", sans-serif; }
.style.chosen { box-shadow: inset 0 0 0 2px #dcdfe3; }
.style.chosen b { font-weight: normal; padding-left: 2px; }
.pv0 { font-size: 13px; }
.pv1, .pv2, .pv3 { padding-left: 2px; }
.style .pv1 { font: bold 25px/28px "Liberation Sans", sans-serif; }
.style .pv2 { font: bold 20px/28px "Liberation Sans", sans-serif; }
.style .pv3 { font-size: 17px; }
.spin { flex: 1; display: flex; flex-direction: column; border-left: 1px solid #dcdfe3; color: #757c8c; }
.spin button { flex: 1; }
.spin button + button { border-top: 1px solid #eceef1; }
.tools { padding: 5px 0 0; justify-content: center; }
.layout { width: 79px; }
.find { width: 121px; gap: 11px; }

/* workspace */
.workspace { flex: 1; min-height: 0; display: flex; }
.vruler { width: 16px; display: flex; flex-direction: column; overflow: hidden; color: #4c566b; font-size: 11px; }
.tabstop { width: 6px; height: 6px; border: solid #a6abb5; border-width: 0 0 2px 2px; margin: 10px 0 9px 3px; flex: none; }
.vruler ol { flex: 1; min-height: 0; background: #e6e9ef; display: flex; flex-direction: column; justify-content: flex-end; overflow: hidden; padding-bottom: 4px; }
.vruler li { flex: 0 0 calc((100% + 11px) / 34); min-height: 0; writing-mode: sideways-lr; display: flex; align-items: center; justify-content: center; line-height: 16px; width: 16px; }
.canvas { flex: 1; min-width: 0; display: flex; justify-content: center; overflow: hidden; padding-left: 9px; }
.sheet { width: 968px; display: flex; flex-direction: column; }
.hruler { height: 25px; flex: none; position: relative; padding-left: 18px; }
.hruler ol { display: flex; height: 15px; width: 937px; background: linear-gradient(#e4e8ee, #e4e8ee) 127px 0 / 677px 15px no-repeat; }
.hruler li { width: 39px; flex: none; padding-left: 1px; font-size: 11px; line-height: 15px; color: #4c566b; text-align: center; padding-right: 20px; background: linear-gradient(#7b8290, #7b8290) 0 6px / 1px 9px no-repeat, linear-gradient(#7b8290, #7b8290) 19px 6px / 1px 9px no-repeat; display: flex; justify-content: center; }
.hruler ol::after { content: ""; width: 1px; flex: none; background: linear-gradient(#7b8290, #7b8290) 0 6px / 1px 9px no-repeat; }
.indent-left { position: absolute; left: 141px; top: 0; }
.indent-right { position: absolute; left: 816px; top: 0; }
.page { flex: 1; background: #fff; position: relative; padding: 14px 147px 0 147px; box-shadow: 0 18px 16px #00000050; font: 20px/38px "Liberation Serif", "Noto Sans CJK SC", serif; color: #222; }
.page p { margin: 0; height: 38px; display: flex; align-items: center; }
.page p svg { margin-top: 8px; color: #8a8a8a; }
.page .selected { background: #c5c5c5; }
.para-handle { position: absolute; left: 67px; top: 176px; gap: 7px; color: #a9b2c0; }
.scroll { width: 14px; display: flex; flex-direction: column; align-items: center; gap: 3px; padding-top: 4px; color: #9298ae; }
.track { flex: 1; width: 14px; background: #e6e7ed; display: flex; flex-direction: column; align-items: center; padding: 6px 0 8px; gap: 14px; color: #8a90a5; }
.run { flex: 1; width: 10px; display: flex; flex-direction: column; padding: 463px 0 74px; }
.thumb { flex: 1; border-radius: 5px; background: #c9cbd2; }

/* style panel */
.panel { width: 262px; border: solid #dcdfe6; border-width: 0 1px; padding: 0 12px; display: flex; flex-direction: column; color: #3f4a60; }
.panel header { display: flex; align-items: center; height: 31px; gap: 12px; margin: 0 -10px 0 -3px; padding-right: 6px; }
.panel h2, .panel h3 { margin: 0; font-weight: normal; font-size: 12px; }
.panel h2 { flex: 1; display: flex; align-items: center; gap: 4px; }
.current-style { height: 32px; margin-top: 8px; font-size: 16px; color: #000; }
.pick.current-style select { padding-left: 6px; }
.pick.current-style svg { margin-right: 8px; }
.actions { display: flex; gap: 10px; margin-top: 7px; }
.actions button { width: 78px; height: 23px; border: 1px solid #d6d9df; background: #fff; }
.panel h3 { font-size: 14px; line-height: 20px; margin-top: 20px; color: #4b566d; }
.list { flex: 1; border: 1px solid #dcdfe6; background: #fff; margin-top: 7px; padding: 1px 12px 0 2px; color: #000; font: 16px/32px "Noto Sans", "Noto Sans CJK SC", sans-serif; }
.list li { height: 34px; border: 1px solid transparent; padding: 0 3px; display: flex; justify-content: space-between; align-items: center; }
.list svg { margin-bottom: 6px; }
.list .picked { border-color: #4f81bd; }
.h1, .h2, .h4 { font-weight: bold; font-family: "DejaVu Sans Mono", "Noto Sans CJK SC", monospace; }
.h1 { font-size: 21px; }
.h2 { font-size: 20px; }
.h4 { font-size: 18px; }
.small { font-size: 13px; }
.small u { margin: 0 3px 6px; font-family: "DejaVu Sans Mono", monospace; font-size: 11px; line-height: 14px; }
.show { display: flex; align-items: center; margin-top: 7px; }
.show label { width: 33px; }
.show .pick { flex: 1; }
.pick #show { padding-left: 4px; }
.foot { display: flex; justify-content: space-between; align-items: center; height: 18px; margin: 10px 0 29px; padding-right: 5px; }
.foot label, .foot a { display: flex; align-items: center; gap: 3px; }
.foot input { width: 13px; height: 13px; margin-right: 4px; }
.foot a { color: #3b7be8; }

.rail { width: 43px; display: flex; flex-direction: column; align-items: center; color: #39435a; padding-right: 1px; }
.grip { width: 20px; height: 5px; border: solid #c3c7ce; border-width: 1px 0; margin: 11px 0 16px; }
.grip + button { margin-top: -4px; }
.rail button { width: 32px; height: 32px; margin-bottom: 4px; flex: none; }
.more { margin-top: auto; border-top: 1px solid #dcdfe6; width: 37px; height: 44px; display: grid; place-items: center; }

/* status bar */
.status { height: 28px; flex: none; display: flex; align-items: center; border-top: 1px solid #d9dce2; padding: 0 12px 1px 10px; white-space: nowrap; }
.status > .vline { margin: 0 7px; background: #e2e4e9; height: 14px; }
.status > .vline.wide { margin: 0 11px; }
.status .gap { width: 16px; }
.check { gap: 3px; margin-left: 10px; }
.check .grey { margin-left: 4px; }
.views { display: flex; align-items: center; margin-left: auto; }
.views button { width: 26px; height: 24px; flex: none; }
.views .vline { margin: 0 10px; }
.views .zoom { width: 52px; gap: 6px; font-size: 13px; }
.views .step { width: 14px; }
.slider { appearance: none; width: 148px; height: 14px; margin: 0 5px 0 8px; background: linear-gradient(#3f485c, #3f485c) 0 7px / 100% 1px no-repeat; }
.slider::-webkit-slider-thumb { appearance: none; width: 12px; height: 12px; border: 1px solid #3f485c; border-radius: 6px; background: #fff; }
.views .full { width: 18px; margin-left: 7px; }

/* find and replace dialog */
.dialog { position: absolute; left: 664px; top: 284px; width: 547px; height: 342px; border: 1px solid #6b6b6b; background: #f0f0f0; color: #000; z-index: 2; padding: 0 9px 0 8px; }
.dialog header { display: flex; align-items: center; gap: 5px; height: 25px; background: #fff; margin: 0 -9px 0 -8px; padding: 0 9px 0 3px; }
.dialog header button { margin-left: auto; }
.dialog-tabs { display: flex; align-items: flex-end; height: 31px; }
.dialog-tabs button { width: 64px; height: 23px; border: 1px solid #d9d9d9; border-bottom: 0; }
.dialog-tabs .active { height: 24px; background: #fff; padding-bottom: 2px; }
.sheetbox { height: 199px; background: #fff; border: 1px solid #dcdcdc; padding: 7px 7px 0; }
.field { display: flex; align-items: center; height: 23px; margin-bottom: 3px; }
.field label, .lab { width: 75px; white-space: nowrap; }
.combo { flex: 1; display: grid; align-items: center; height: 23px; }
.combo > * { grid-area: 1 / 1; }
.combo input { height: 23px; border: 1px solid #7a7a7a; background: #fff; padding: 0 4px; width: 100%; }
.combo svg { justify-self: end; margin-right: 4px; color: #444; }
.cursor { width: 1px; height: 17px; background: #000; margin-left: 5px; }
.second { margin-top: 26px; }
.buttons { display: flex; gap: 8px; }
.buttons button { width: 77px; height: 30px; background: #e1e1e1; border: 1px solid #adadad; }
.buttons button:disabled { background: #ccc; border-color: #bfbfbf; color: #9c9c9c; }
.sheetbox .buttons { margin-top: 52px; }
.buttons .b-adv { width: 108px; gap: 9px; }
.buttons .b-fmt { gap: 11px; }
.buttons .b-spec { width: 84px; gap: 3px; }
.replace { margin-top: 9px; }
.last { align-items: center; }
.buttons.last { margin-top: 8px; }
.last a { display: flex; align-items: center; gap: 5px; color: #3b7bd8; margin: 0 auto 0 3px; }
.buttons .mid { width: 83px; }

/* floating items */
.pointer { position: absolute; left: 958px; top: 410px; stroke: none; z-index: 3; }
.ime { position: absolute; right: 4px; top: 737px; height: 26px; width: 153px; padding: 0 4px 0 37px; display: flex; align-items: center; justify-content: space-between; background: #fff; border: 1px solid #b3cff0; color: #0b6bd0; z-index: 3; }
.ime b { font-size: 15px; }
.ime-logo { position: absolute; left: -1px; top: -5px; stroke: none; }
.meter { position: absolute; left: 1593px; top: 937px; display: flex; align-items: center; color: #fff; z-index: 4; }
.rates { width: 80px; height: 42px; border-radius: 21px 0 0 21px; background: #30333d; display: flex; flex-direction: column; justify-content: center; line-height: 21px; padding-left: 10px; }
.rates span { display: flex; align-items: center; }
.rates b { margin-left: 15px; }
.rates small { font-size: 10px; color: #c4c6cc; }
.dial { width: 60px; height: 60px; margin-left: -21px; border-radius: 30px; background: #4c505de0; box-shadow: 0 1px 4px #0008; display: grid; place-items: center; }
.dial > * { grid-area: 1 / 1; }
.dial strong { font: 26px/30px "Open Sans", sans-serif; font-weight: 300; padding-bottom: 1px; }
.dial small { font-size: 10px; }
.brand { position: absolute; right: 6px; top: 987px; display: flex; align-items: center; z-index: 3; opacity: .75; pointer-events: none; }
.brand div { display: flex; flex-direction: column; }
.brand strong { font-size: 21px; line-height: 24px; color: #5ca0dc; }
.brand span { font: bold 17px/20px "Liberation Sans", sans-serif; color: #55b877; }
```
